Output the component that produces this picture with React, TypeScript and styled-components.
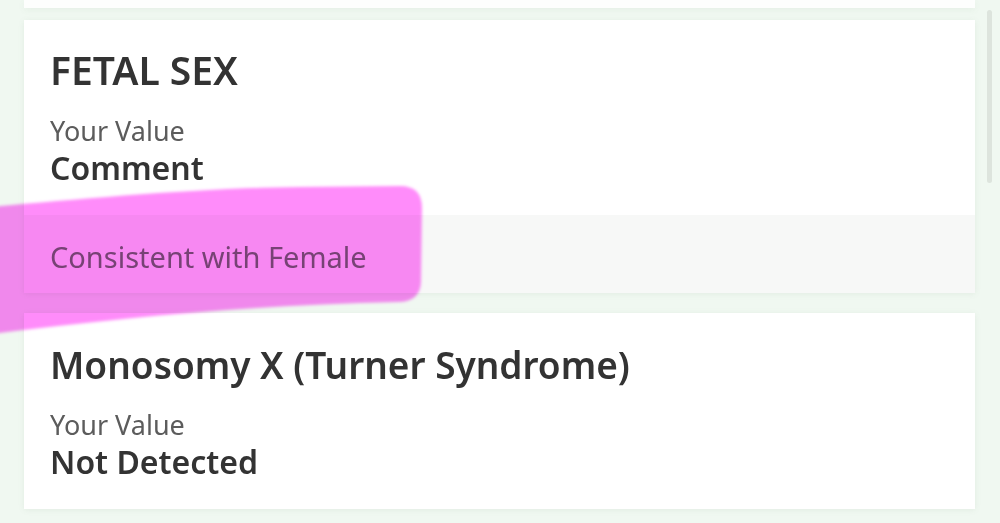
import React from "react";
import styled, { createGlobalStyle } from "styled-components";

const Global = createGlobalStyle`
  html, body { margin: 0; padding: 0; }
  body {
    background: #f0f8f1;
    font-family: "Noto Sans", "Open Sans", sans-serif;
    overflow: hidden;
  }
`;

const Page = styled.div`
  position: relative;
  width: 1000px;
  height: 523px;
  display: flex;
  background: #f0f8f1;
  overflow: hidden;
`;

const Content = styled.div`
  width: 951px;
  padding-left: 24px;
  display: flex;
  flex-direction: column;
`;

const Gutter = styled.div`
  width: 25px;
  padding-top: 10px;
  padding-left: 3px;
  box-sizing: border-box;
  display: flex;
  justify-content: center;
`;

const Thumb = styled.div`
  width: 5px;
  height: 173px;
  border-radius: 3px;
  background: #dde4dd;
`;

const Stub = styled.div`
  height: 8px;
  background: #fdfefd;
  box-shadow: 0 2px 6px rgba(120, 150, 120, 0.08);
`;

const Card = styled.section<{ $gap: number }>`
  margin-top: ${(p) => p.$gap}px;
  background: #ffffff;
  box-shadow: 0 1px 6px rgba(110, 140, 110, 0.1);
  display: flex;
  flex-direction: column;
`;

const Body = styled.div<{ $top: number }>`
  padding: ${(p) => p.$top}px 26px 28px 26px;
  display: flex;
  flex-direction: column;
`;

const Title = styled.h2<{ $size: number }>`
  margin: 0;
  font-size: ${(p) => p.$size}px;
  line-height: ${(p) => Math.round(p.$size * 1.36)}px;
  font-weight: 600;
  color: #333333;
`;

const Label = styled.div`
  margin-top: 18px;
  font-size: 27px;
  line-height: 34px;
  font-weight: 400;
  color: #5c5c5c;
`;

const Value = styled.div`
  margin-top: 1px;
  font-size: 32px;
  line-height: 38px;
  font-weight: 600;
  color: #333333;
`;

const CommentRow = styled.div`
  background: #f7f8f7;
  padding: 22px 26px 16px 26px;
  font-size: 29px;
  line-height: 40px;
  color: #777777;
`;

const Highlight = styled.svg`
  position: absolute;
  left: 0;
  top: 0;
  width: 1000px;
  height: 523px;
  pointer-events: none;
  mix-blend-mode: multiply;
`;

export default function App() {
  return (
    <>
      <Global />
      <Page>
        <Content>
          <Stub />
          <Card $gap={12}>
            <Body $top={23}>
              <Title $size={39}>FETAL SEX</Title>
              <Label>Your Value</Label>
              <Value>Comment</Value>
            </Body>
            <CommentRow>Consistent with Female</CommentRow>
          </Card>
          <Card $gap={20}>
            <Body $top={27}>
              <Title $size={37}>Monosomy X (Turner Syndrome)</Title>
              <Label>Your Value</Label>
              <Value>Not Detected</Value>
            </Body>
          </Card>
        </Content>
        <Gutter>
          <Thumb />
        </Gutter>
        <Highlight viewBox="0 0 1000 523">
          <defs>
            <filter id="soft" x="-5%" y="-20%" width="110%" height="140%">
              <feGaussianBlur stdDeviation="1.4" />
            </filter>
          </defs>
          <path
            d="M -10 207 C 80 199, 200 188, 300 187 L 400 186 Q 422 186 422 208 L 421 282 Q 420 302 398 302 C 250 305, 120 318, -10 334 Z"
            fill="#ff8cfa"
            filter="url(#soft)"
          />
        </Highlight>
      </Page>
    </>
  );
}
